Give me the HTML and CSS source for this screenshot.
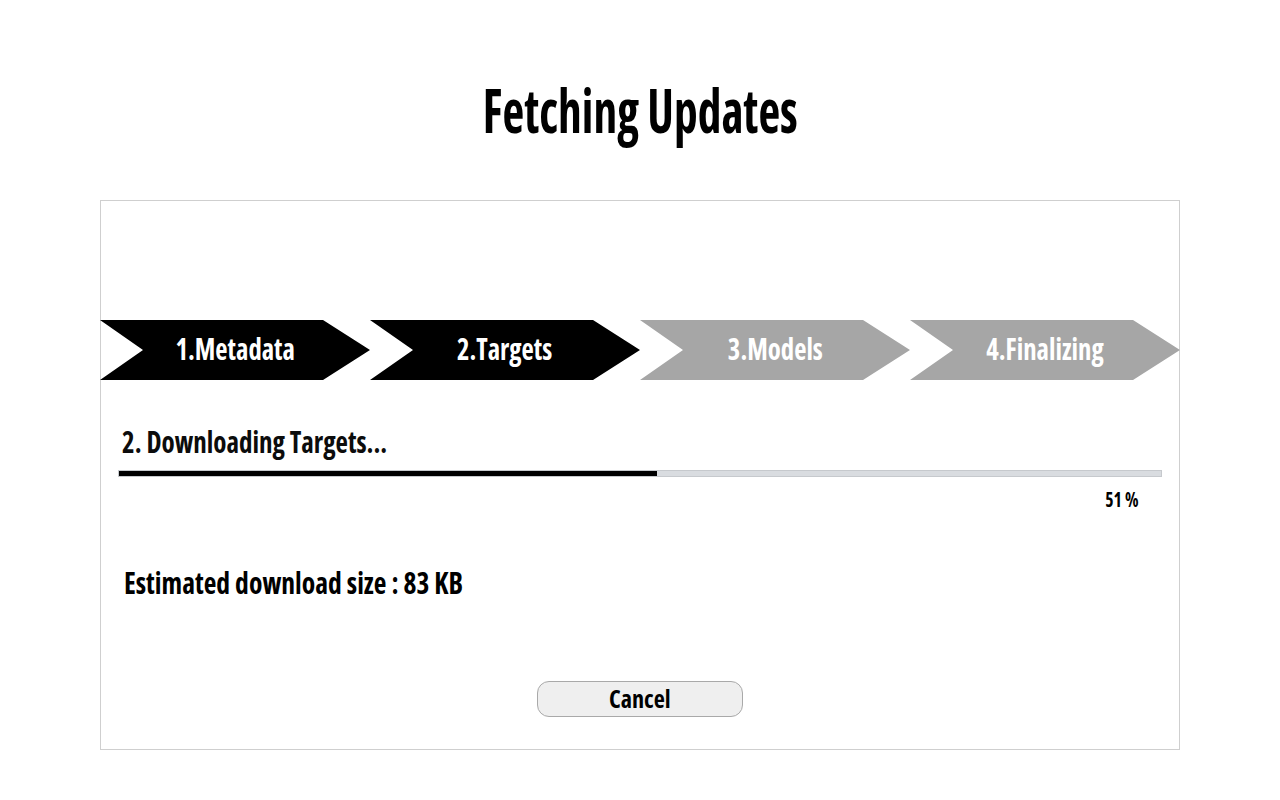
FILE: index.html
```html
<!DOCTYPE html>
<html lang="en">
<head>
<meta charset="utf-8">
<title>Fetching Updates</title>
<link rel="stylesheet" href="styles.css">
</head>
<body>
<h1 class="title"><span class="squeeze">Fetching Updates</span></h1>
<div class="panel">
  <div class="steps">
    <div class="step done"><span class="squeeze">1.Metadata</span></div>
    <div class="step done"><span class="squeeze">2.Targets</span></div>
    <div class="step pending"><span class="squeeze">3.Models</span></div>
    <div class="step pending"><span class="squeeze">4.Finalizing</span></div>
  </div>
  <div class="progress">
    <div class="status"><span class="squeeze">2. Downloading Targets...</span></div>
    <div class="track"><div class="fill" style="width:51.6%"></div></div>
    <div class="percent"><span class="squeeze">51 %</span></div>
    <div class="size"><span class="squeeze">Estimated download size : 83 KB</span></div>
  </div>
  <div class="actions">
    <button class="cancel" type="button"><span class="squeeze">Cancel</span></button>
  </div>
</div>
</body>
</html>
```
FILE: styles.css
```css
html, body {
  margin: 0;
  background: #ffffff;
}
body {
  font-family: "Open Sans", "Roboto", sans-serif;
  font-stretch: 75%;
  font-weight: 700;
  color: #000;
}
.squeeze {
  display: inline-block;
  transform: scaleX(0.8);
  white-space: nowrap;
}
.title {
  margin: 0 0 54px;
  padding-top: 74px;
  font-size: 60px;
  line-height: 72px;
  font-weight: 700;
  text-align: center;
}
.title .squeeze { transform: scaleX(0.79); transform-origin: center; }
.panel {
  box-sizing: border-box;
  width: 1080px;
  height: 550px;
  margin: 0 auto;
  border: 1px solid #cfcfcf;
  padding-top: 119px;
}
.steps {
  display: flex;
  height: 60px;
  margin: 0 -1px;
}
.step {
  box-sizing: border-box;
  flex: 0 0 270px;
  height: 60px;
  padding-bottom: 4px;
  display: flex;
  align-items: center;
  justify-content: center;
  color: #fff;
  font-size: 30px;
  clip-path: polygon(0 0, calc(100% - 47px) 0, 100% 50%, calc(100% - 47px) 100%, 0 100%, 43px 50%);
}
.step .squeeze { transform: scaleX(0.89); transform-origin: center; }
.step.done { background: #000; }
.step.pending { background: #a6a6a6; }
.progress {
  padding: 0 17px;
}
.status {
  margin-top: 44px;
  padding-left: 4px;
  font-size: 30px;
  line-height: 36px;
  color: #0c0c0c;
}
.status .squeeze { transform: scaleX(0.9); transform-origin: left center; }
.size .squeeze { transform: scaleX(0.92); transform-origin: left center; }
.track {
  box-sizing: border-box;
  height: 7px;
  margin-top: 10px;
  border: 1px solid #c6c9cd;
  background: #d9dce0;
}
.fill {
  height: 5px;
  background: #000;
}
.percent {
  margin-top: 8px;
  padding-right: 23px;
  font-size: 22px;
  line-height: 26px;
  text-align: right;
}
.percent .squeeze { transform-origin: right center; }
.size {
  margin-top: 54px;
  padding-left: 6px;
  font-size: 30px;
  line-height: 36px;
}
.actions {
  display: flex;
  justify-content: center;
  margin-top: 80px;
}
.cancel {
  box-sizing: border-box;
  width: 206px;
  height: 36px;
  padding: 0 0 2px;
  border: 1px solid #a9a9a9;
  border-radius: 12px;
  background: #efefef;
  color: #000;
  font-family: inherit;
  font-stretch: inherit;
  font-weight: 700;
  font-size: 25px;
  line-height: 30px;
  display: flex;
  align-items: center;
  justify-content: center;
}
.cancel .squeeze { transform: scaleX(0.97); transform-origin: center; }
```
